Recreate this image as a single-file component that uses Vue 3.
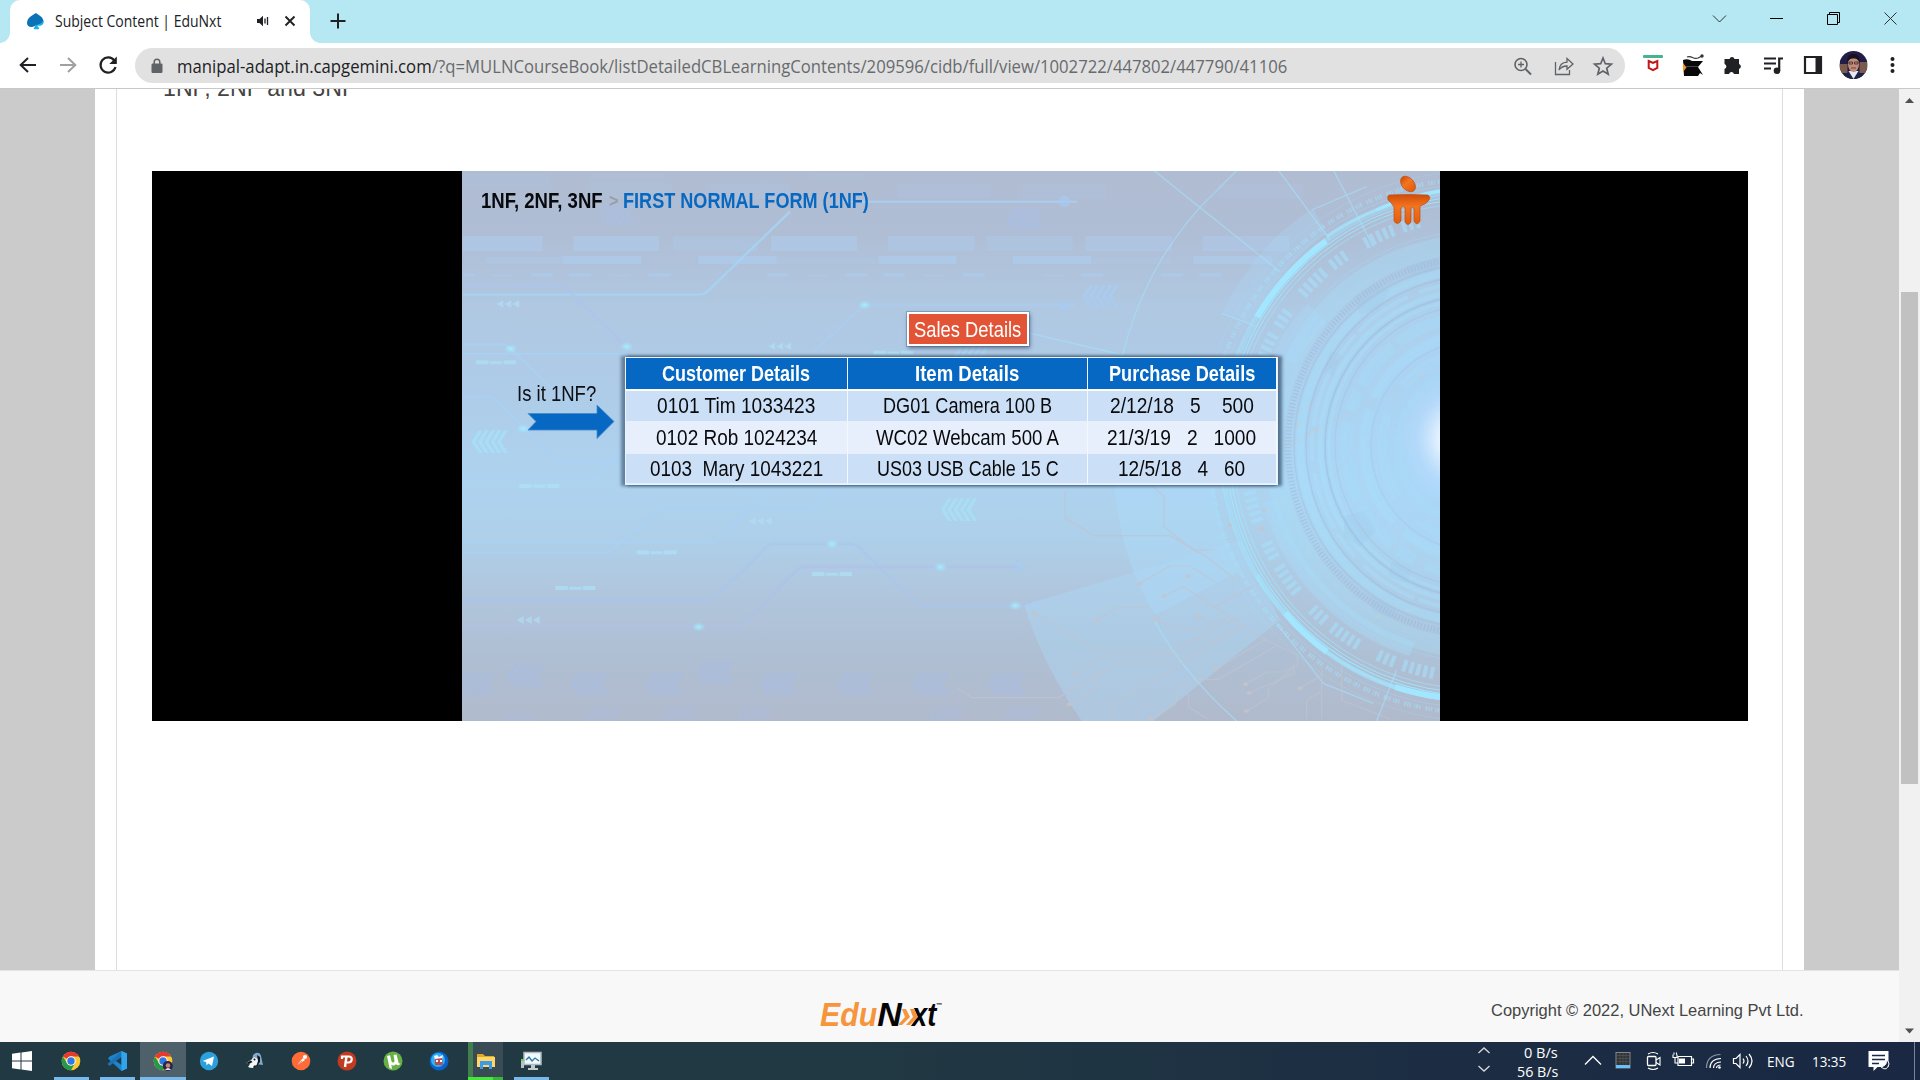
<script setup>
// Stretches or narrows a run of text to a given width in pixels.
const vFit = {
  mounted(el, { value }) {
    const w = el.offsetWidth
    if (!w) return
    el.style.transform = `scaleX(${value / w})`
    el.style.marginRight = `${value - w}px`
  }
}

const columns = [
  { title: 'Customer Details', w: 148 },
  { title: 'Item Details', w: 104 },
  { title: 'Purchase Details', w: 146 }
]
const rows = [
  [['0101 Tim 1033423', 158], ['DG01 Camera 100 B', 169], ['2/12/18   5    500', 144]],
  [['0102 Rob 1024234', 161], ['WC02 Webcam 500 A', 183], ['21/3/19   2   1000', 149]],
  [['0103  Mary 1043221', 173], ['US03 USB Cable 15 C', 182], ['12/5/18   4   60', 127]]
]

const chevrons = [
  [420, 97, 0.5, '#a8c0e8'], [1640, 112, 0.6, '#a8c0e8'], [1867, 345, 0.75, '#a9cdf2'],
  [34, 781, 0.85, '#a8e0fa'], [1442, 985, 0.85, '#a9e0f6'], [1480, 525, 0.6, '#a9daf6'],
  [-6, 1508, 0.65, '#a9bde2'], [142, 1483, 0.7, '#a9bde2'], [332, 1508, 0.7, '#a9bde2'],
  [560, 1508, 0.7, '#a9bde2'], [712, 1473, 0.7, '#a9bde2'], [902, 1508, 0.7, '#a9bde2'],
  [1130, 1508, 0.7, '#a9bde2'], [1357, 1508, 0.7, '#a9bde2'], [1586, 1508, 0.7, '#a9bde2'],
  [120, 1630, 0.4, '#a9bde2'], [375, 1610, 0.4, '#a9bde2'],
  [605, 1610, 0.4, '#a9bde2'], [832, 1610, 0.4, '#a9bde2'], [1405, 1610, 0.4, '#a9bde2'], [1633, 1610, 0.4, '#a9bde2']
]

const bars = [
  [8, 198, 240, 46, 0.5], [340, 198, 258, 46, 0.5], [638, 198, 258, 46, 0.28], [933, 198, 258, 46, 0.5],
  [1284, 198, 260, 46, 0.45], [1580, 198, 258, 46, 0.32], [1876, 198, 260, 46, 0.4], [2228, 198, 260, 46, 0.4],
  [76, 260, 232, 22, 0.28], [308, 258, 236, 24, 0.6], [714, 258, 236, 24, 0.6], [950, 262, 300, 20, 0.2],
  [1255, 258, 234, 24, 0.6], [1658, 258, 236, 24, 0.6], [1894, 262, 240, 20, 0.2], [2200, 258, 236, 24, 0.55],
  [8, 10, 262, 46, 0.16], [390, 8, 220, 20, 0.12], [740, 40, 250, 46, 0.16], [1310, 40, 280, 46, 0.14],
  [1684, 42, 256, 44, 0.16], [380, 40, 256, 44, 0.12], [1050, 8, 165, 20, 0.12], [2270, 40, 256, 46, 0.14],
  [8, 310, 35, 10, 0.5], [94, 312, 64, 10, 0.2], [214, 310, 66, 10, 0.6], [327, 310, 66, 10, 0.6], [445, 312, 64, 10, 0.2],
  [565, 310, 66, 10, 0.6], [920, 310, 66, 10, 0.6], [1040, 312, 64, 10, 0.2], [1158, 310, 66, 10, 0.6], [1270, 310, 66, 10, 0.6],
  [1392, 312, 60, 10, 0.2], [1509, 310, 66, 10, 0.6], [1750, 312, 64, 10, 0.2], [1864, 310, 66, 10, 0.6],
  [2102, 310, 66, 10, 0.6], [2218, 310, 66, 10, 0.6]
]
const triangles = [[109, 402], [924, 529], [866, 1053], [170, 1350]]
const dashes = [[48, 571], [1240, 542], [178, 942], [530, 1141], [286, 1248], [1056, 1206]]
const sparks = [[1214, 405], [152, 536], [500, 530], [190, 776], [1116, 1122], [1441, 1191], [716, 1371], [1666, 1307]]
const traces = [
  'M52 1555 L98 1583 H355 L500 1497', 'M283 1330 L465 1439 H693 L895 1345', 'M410 1509 L500 1457 H690 L875 1350',
  'M388 1603 L468 1555 V1518 M355 1583 L530 1478 H690 L910 1365', 'M516 1647 V1605 L910 1372', 'M468 1350 L530 1313 H620', 'M630 1647 L707 1603 V1555 L745 1535 V1610 L803 1647',
  'M375 960 V1045 L465 1097 H690 L800 1160 L900 1240', 'M640 950 L672 980 V1070 L760 1140 H830', 'M598 1240 L690 1188 H750 L830 1240',
  'M827 1497 L975 1410 M1020 1430 L1072 1455 V1485 L985 1556 V1583 L920 1623', 'M778 1528 H835 L1005 1430', 'M915 1543 L980 1506 H1030 L1060 1490',
  'M927 1569 L1062 1510 V1480', 'M1080 1555 L1145 1515 V1480 V1647', 'M1100 1647 V1590 L1145 1562', 'M1205 1470 V1590 L1350 1647',
  'M640 1345 L700 1375 H770 L860 1345', 'M672 1278 L730 1250 L960 1400 L1020 1430', 'M775 1340 L820 1365 M823 1310 L1010 1210',
  'M1450 613 L1200 745 L1020 830', 'M1107 707 L1020 757 M1075 763 L1020 793', 'M1131 783 L1050 830', 'M1500 700 L1250 830 L1150 960'
]
const nodes = [[283, 1330], [470, 1350], [410, 1509], [388, 1603], [600, 1240], [745, 1219], [672, 1278], [775, 1340], [648, 1349], [827, 1497],
  [778, 1528], [917, 1543], [927, 1569], [919, 1623], [1080, 1555], [630, 1646], [1450, 613], [1107, 707], [1075, 763], [1131, 783],
  [873, 1064], [965, 1075], [1405, 1322], [1314, 1339], [1453, 1048], [975, 1020]]

// Concentric dial at the right: radius, stroke width, opacity, dash pattern, colour
const rings = [
  [267, 4.5, 0.5, '1.4 1.2 2 1 1 3 1.5 1 1.5 1 2 5', '#a3e4ff'], [262, 0.8, 0.5, '', '#9adcff'], [275, 0.7, 0.35, '', '#9ee5ff'],
  [254, 4.5, 0.4, '', '#a0e4ff'], [250, 1.2, 0.9, '', '#9be5ff'], [247, 1, 0.8, '', '#a3e8ff'], [243, 1.2, 0.6, '', '#9be5ff'],
  [256.5, 1, 0.8, '', '#9be5ff'],
  [231, 12, 0.6, '4 3 4 3 4 3 4 3 4 9 4 3 4 3 4 22', '#a5e0fb'],
  [215, 0.7, 0.4, '', '#a5e0fb'], [202, 19, 0.3, '', '#a5e0fb'],
  [188, 6, 0.5, '1 2.4', '#8fb3dc'], [182, 1.2, 0.35, '', '#8eb7e0'], [176, 8, 0.42, '', '#a4e2ff'], [170, 1.2, 0.4, '', '#8eb7e0'],
  [164, 4, 0.4, '60 12 30 5', '#a4e2ff'], [156, 5, 0.36, '', '#a4e2ff'], [151, 1.6, 0.4, '', '#8ab4df'], [147, 3, 0.4, '', '#a4e2ff'],
  [141, 1.2, 0.25, '', '#8ab4df'], [130, 12, 0.26, '80 12 20 8 50 6', '#a4e2ff'], [112, 10, 0.3, '120 14', '#a4e2ff'],
  [105, 1.2, 0.2, '', '#8ab4df'], [94, 10, 0.2, '90 30', '#a4e2ff'], [78, 7, 0.18, '', '#a4e2ff']
]
</script>

<template>
  <div class="screen">
    <header class="tabstrip">
      <div class="tab">
        <svg class="favicon" width="19" height="18" viewBox="0 0 19 18">
          <path d="M10 1C8.500 2.500 1 5 1 11c0 4.500 5.500 5 8.500 2.500C15 13 18 11 17 7.500 16 4 12 3 10 1z" fill="#0a72b5" />
          <path d="M17.500 8c1.200 4.500-2.500 6.500-6 5.500 0 1 .6 1.800 2 2.500l-1 1.300H8.300L7.500 16c1.500-.5 1.600-2 1.500-3C13 13 16 11.500 17.500 8z" fill="#1bb1e7" />
        </svg>
        <div class="tab-title"><span v-fit="166">Subject Content | EduNxt</span></div>
        <svg width="14" height="14" viewBox="0 0 14 14"><path d="M1 5h2.500L7 1.800v10.400L3.500 9H1z" fill="#202124" /><path d="M9 4.500v5M11.500 3v8" stroke="#202124" stroke-width="1.300" /></svg>
        <svg class="tab-close" width="12" height="12" viewBox="0 0 12 12"><path d="M1.500 1.500l9 9m0-9l-9 9" stroke="#202124" stroke-width="1.900" /></svg>
      </div>
      <svg class="newtab" width="16" height="16" viewBox="0 0 16 16"><path d="M8 .5v15M.5 8h15" stroke="#202124" stroke-width="2" /></svg>
      <div class="winctl">
        <svg width="57" height="38" viewBox="0 0 57 38"><path d="M22 15.500l6.500 6.500 6.500-6.500" fill="none" stroke="#333" /></svg>
        <svg width="57" height="38" viewBox="0 0 57 38"><path d="M22 18.500h13" stroke="#000" /></svg>
        <svg width="57" height="38" viewBox="0 0 57 38"><path d="M22.500 14.500h10v10h-10zM24.500 14v-1.500h10v10H33" fill="none" stroke="#000" /></svg>
        <svg width="57" height="38" viewBox="0 0 57 38"><path d="M22.500 12.500l12 12m0-12l-12 12" fill="none" stroke="#333" /></svg>
      </div>
    </header>

    <div class="toolbar">
      <div class="nav">
        <svg width="40" height="24" viewBox="0 0 40 24"><path d="M28 12H13m7-7l-7.300 7 7.300 7" fill="none" stroke="#202124" stroke-width="2" /></svg>
        <svg width="40" height="24" viewBox="0 0 40 24"><path d="M12 12h15m-7-7l7.300 7-7.300 7" fill="none" stroke="#a0a1a3" stroke-width="2" /></svg>
        <svg width="40" height="24" viewBox="0 0 40 24"><path d="M26.300 7.500A7.600 7.600 0 1 0 27.500 14" fill="none" stroke="#202124" stroke-width="2.200" /><path d="M28.800 3.500v7.500h-7.500z" fill="#202124" /></svg>
      </div>
      <div class="omnibox">
        <svg class="lock" width="12" height="16" viewBox="0 0 12 16"><rect x=".5" y="5.500" width="11" height="9.500" rx="1.200" fill="#5f6368" /><path d="M3.200 6V4a2.800 2.800 0 0 1 5.600 0v2" fill="none" stroke="#5f6368" stroke-width="1.500" /></svg>
        <div class="url"><span v-fit="255">manipal-adapt.in.capgemini.com</span><span v-fit="855" class="path">/?q=MULNCourseBook/listDetailedCBLearningContents/209596/cidb/full/view/1002722/447802/447790/41106</span></div>
        <svg width="40" height="22" viewBox="0 0 40 22"><circle cx="18" cy="9.500" r="6" fill="none" stroke="#5f6368" stroke-width="1.600" /><path d="M15 9.500h6M18 6.500v6" stroke="#5f6368" stroke-width="1.300" /><path d="M22.500 14l5.500 5.500" stroke="#5f6368" stroke-width="2" /></svg>
        <svg width="40" height="22" viewBox="0 0 40 22"><path d="M12.500 7v12.500h14V15M16 15c.5-5 3.500-7.500 8-7.800V3.500L30 9l-6 5.300V11c-3.500 0-6 1-8 4z" fill="none" stroke="#5f6368" stroke-width="1.300" /></svg>
        <svg width="40" height="22" viewBox="0 0 40 22"><path d="M20 3l2.300 5.700 6.100.5-4.700 4 1.500 6L20 16l-5.200 3.200 1.500-6-4.700-4 6.100-.5z" fill="none" stroke="#5f6368" stroke-width="1.700" /></svg>
      </div>
      <div class="exts">
        <svg width="40" height="28" viewBox="0 0 40 28"><rect x="10" y="4" width="20" height="3" rx="1" fill="#43b391" /><path d="M15.700 10l4.300 2 4.300-2v7L20 19.200 15.700 17z" fill="none" stroke="#c01818" stroke-width="2" /></svg>
        <svg width="40" height="28" viewBox="0 0 40 28"><path d="M10 9q5-2 9 1h9l2 0-5 6 5 8-3-2-2 3H11z" fill="#080808" /><path d="M10 12v9l3.500-4.500z" fill="#f79420" /><path d="M14 6c5-2 6 3 11 1l4-2" fill="none" stroke="#333" stroke-width="1.200" /><circle cx="29" cy="5" r="1.700" fill="#333" /><path d="M13 15.500h12" stroke="#444" stroke-width="1" /></svg>
        <svg width="40" height="28" viewBox="0 0 40 28"><path d="M12 8h4.500a2.600 2.600 0 0 1 5 0H26v5a2.600 2.600 0 0 1 0 5v5h-5a2.600 2.600 0 0 0-5 0h-4.500v-5a2.600 2.600 0 0 0 0-5V8z" fill="#202124" /></svg>
        <svg width="40" height="28" viewBox="0 0 40 28"><path d="M11 7.500h12M11 12.500h12M11 17.500h7" stroke="#202124" stroke-width="2" /><path d="M26.200 20V7.500H30" fill="none" stroke="#202124" stroke-width="2.200" /><circle cx="24" cy="19.800" r="3.300" fill="#202124" /></svg>
        <svg width="40" height="28" viewBox="0 0 40 28"><path d="M12 6h16v16H12z" fill="none" stroke="#202124" stroke-width="2.200" /><path d="M22.500 6H28v16h-5.500z" fill="#202124" /></svg>
        <svg width="41" height="28" viewBox="-6.500 0 41 28">
          <clipPath id="av"><circle cx="14" cy="14" r="14" /></clipPath>
          <g clip-path="url(#av)"><path d="M0 0h28v28H0z" fill="#221c48" /><path d="M0 13h8v9H0zM20 11h8v11h-8z" fill="#7a5a4a" /><path d="M2 28c2-6 6-7 12-7s9 2 11 7z" fill="#1f2442" /><path d="M9 20l5 8 5-8z" fill="#e6e9f4" /><ellipse cx="14" cy="13" rx="5.500" ry="8" fill="#c08d78" /><path d="M8 12C7 5 10 3 14 3s7 2 6 9c-1-3-2-4.500-6-4.500s-5 1.500-6 4.500z" fill="#17121e" /><path d="M9.500 11h3.500v2H9.500zM15 11h3.500v2H15z" fill="none" stroke="#3c2626" stroke-width=".8" /><path d="M11.500 17h5" stroke="#7c3c3c" /></g>
        </svg>
        <svg width="38" height="28" viewBox="0 0 38 28"><g fill="#202124"><circle cx="18.500" cy="8" r="2" /><circle cx="18.500" cy="14" r="2" /><circle cx="18.500" cy="20" r="2" /></g></svg>
      </div>
    </div>

    <div class="viewport">
      <div class="content">
        <main class="page">
          <section class="panel">
            <h1><span v-fit="193">1NF, 2NF and 3NF</span></h1>
            <div class="player">
              <div class="slide">
                <svg class="art" width="978" height="550" viewBox="0 0 978 550">
                  <defs>
                    <radialGradient id="glow"><stop offset="0" stop-color="#fff" /><stop offset=".35" stop-color="#eef7ff" stop-opacity=".85" /><stop offset=".7" stop-color="#bcdcff" stop-opacity=".45" /><stop offset="1" stop-color="#b0dcff" stop-opacity="0" /></radialGradient>
                    <radialGradient id="halo"><stop offset="0" stop-color="#a8d8ff" stop-opacity=".7" /><stop offset=".6" stop-color="#a8dcfb" stop-opacity=".4" /><stop offset="1" stop-color="#a8dcfb" stop-opacity="0" /></radialGradient>
                    <radialGradient id="spark"><stop offset="0" stop-color="#9df3ff" /><stop offset=".35" stop-color="#a4ecff" stop-opacity=".6" /><stop offset="1" stop-color="#a4e8ff" stop-opacity="0" /></radialGradient>
                    <linearGradient id="orange" x2="0" y2="1"><stop offset="0" stop-color="#cf4d08" /><stop offset=".4" stop-color="#f47420" /><stop offset="1" stop-color="#e05c0c" /></linearGradient>
                  </defs>
                  <g transform="translate(-2 -1) scale(.33333)">
                    <rect v-for="(b, i) in bars" :key="'b' + i" :x="b[0]" :y="b[1]" :width="b[2]" :height="b[3]" :opacity="b[4]" fill="#aecdf0" />
                    <g v-for="(c, i) in chevrons" :key="'c' + i" :transform="`translate(${c[0]} ${c[1]})`" :fill="c[3]" :opacity="c[2]">
                      <path v-for="n in 5" :key="n" :transform="`translate(${(n - 1) * 19} 0)`" d="M22 0h12L13 34l21 34H22L0 34z" />
                    </g>
                    <g fill="#b0dcf6" opacity=".75"><path v-for="(t, i) in triangles" :key="'t' + i" :transform="`translate(${t[0]} ${t[1]})`" d="M0 0l21-12v24zM24 0l21-12v24zM48 0l21-12v24z" /></g>
                    <g fill="#aee2fa" opacity=".7"><path v-for="(d, i) in dashes" :key="'d' + i" :transform="`translate(${d[0]} ${d[1]})`" d="M0 0h38v12H0zM42 2h36v9H42zM82 0h38v12H82z" /></g>
                    <g fill="none" stroke="#a9d2f7" stroke-width="6" opacity=".8">
                      <path stroke="#a4d6f8" stroke-width="7" d="M8 374H715Q733 374 745 362L990 125" />
                      <path stroke="#afc3ee" d="M8 345H290Q310 345 325 362L500 530" />
                      <path d="M1214 405L1060 545M1214 405H1850" opacity=".7" /><path d="M1150 95H1850M8 523H135L152 536L345 720M8 552H500M8 680H85Q97 680 105 690L280 860Q300 878 315 878H480M8 917H390Q405 917 418 900L480 850M445 1148L465 1130L590 1030Q600 1018 615 1018H1045Q1060 1018 1070 1008L1118 960M8 1118H765L932 960M8 1148H445" />
                      <path stroke="#a9c6f0" d="M8 1288H740Q760 1288 775 1275L920 1130Q930 1122 945 1122H1170Q1190 1122 1200 1135L1360 1290Q1375 1307 1390 1307H1720" />
                      <path stroke="#afc0ec" d="M8 1371H830Q845 1371 855 1360L1005 1205Q1020 1191 1040 1191H1675" />
                    </g>
                    <g fill="#a7cbf3" opacity=".7"><circle cx="1813" cy="94" r="17" /><circle cx="1811" cy="406" r="17" opacity=".6" /><circle cx="1677" cy="1188" r="17" opacity=".6" /><circle cx="1728" cy="1307" r="17" opacity=".6" /></g>
                    <ellipse v-for="(s, i) in sparks" :key="'s' + i" :cx="s[0]" :cy="s[1]" rx="21" ry="15" fill="url(#spark)" />
                  </g>
                  <g transform="translate(478 -1) scale(.33333)">
                    <path d="M520 860Q520 1130 645 1335L905 1200Q820 1070 820 860z" fill="#aadcfb" opacity=".45" />
                    <path d="M252 1305L905 1110L1020 1350L640 1653H425Q310 1490 252 1305z" fill="#acd9f8" opacity=".42" />
                    <path d="M845 430Q950 220 1120 115L1160 190Q1010 300 935 465z" fill="#a9d8f7" opacity=".3" />
                    <g fill="none" stroke="#a5e1f9" stroke-width="4" opacity=".65"><path d="M640 0L1020 305M892 0L780 112Q610 300 548 555M1015 0L1170 210M1180 0L1300 230M270 490L550 555M845 430L950 470M640 1345Q720 1500 890 1653M1370 1500L1310 1653M1010 1360L1150 1540L1300 1600M1115 120L1280 50" /></g>
                    <g fill="none" stroke="#bfc4d0" stroke-width="3.500" opacity=".75"><path v-for="(t, i) in traces" :key="i" :d="t" /></g>
                    <g fill="#c7c4c6" opacity=".85"><ellipse v-for="(n, i) in nodes" :key="i" :cx="n[0]" :cy="n[1]" rx="8" ry="5.500" /></g>
                  </g>
                  <circle cx="1014" cy="275" r="245" fill="url(#halo)" />
                  <g fill="none">
                    <circle v-for="(r, i) in rings" :key="'r' + i" cx="1014" cy="275" :r="r[0]" :stroke-width="r[1]" :opacity="r[2]" :stroke-dasharray="r[3]" :stroke="r[4]" />
                    <g stroke="#a2e6ff" stroke-width="6">
                      <path d="M795 146A254 254 0 0 1 864 70" /><path d="M823 442A254 254 0 0 0 865 481" /><path d="M933 516A254 254 0 0 0 978 526" />
                      <path d="M914 39A257 257 0 0 1 978 20" stroke-width="3.500" />
                      <path d="M865 65A257 257 0 0 1 914 39M865 481A254 254 0 0 0 933 516" stroke-width="3" opacity=".7" />
                      <path d="M795 404A254 254 0 0 0 823 442" stroke-width="5" opacity=".5" />
                    </g>
                    <path d="M808 330A213 213 0 0 0 950 478" stroke="#a8dcfb" stroke-width="15" opacity=".4" />
                    <path d="M822 188A207 207 0 0 1 855 142" stroke="#a8dcfb" stroke-width="26" opacity=".3" />
                  </g>
                  <g fill="#9dc2e4" opacity=".22"><path d="M892 125l20-12 16 6-12 20-18 4zM882 345l20-5 12 20-16 16-16-10zM908 425l24 12 5 12-25-8zM945 95l30-8v12l-25 6zM868 180l12 5-10 20-8-5zM930 390l20 10-6 12-18-6z" /></g>
                  <ellipse cx="1000" cy="268" rx="66" ry="70" fill="url(#glow)" />
                  <g fill="url(#orange)" stroke="#b9521b" stroke-width=".7">
                    <ellipse cx="946" cy="13" rx="6" ry="9" transform="rotate(-42 946 13)" />
                    <path d="M927 24Q946 23 966 24Q969 26 967 29Q965 33 958 35V50Q955 56 952 50V38Q951 35 949 37V51Q946 56 943 51V37Q941 34 939 37V50Q935 55 932 50V36Q929 31 926 29Q925 25 927 24z" />
                  </g>
                </svg>

                <div class="crumbs">
                  <span v-fit="122" class="c-root">1NF, 2NF, 3NF</span>
                  <span v-fit="10" class="c-sep">&gt;</span>
                  <span v-fit="246" class="c-here">FIRST NORMAL FORM (1NF)</span>
                </div>
                <div class="badge"><span v-fit="107">Sales Details</span></div>
                <div class="board">
                  <div class="prompt">
                    <span v-fit="79">Is it 1NF?</span>
                    <svg width="90" height="38" viewBox="0 0 90 38"><path d="M1 10.500H70V2L87 18.500L70 35.500V27H1l8-8.500z" fill="#0768c3" stroke="#4389ca" stroke-width=".8" /></svg>
                  </div>
                  <div class="grid">
                    <div v-for="c in columns" :key="c.title" class="th"><span v-fit="c.w">{{ c.title }}</span></div>
                    <template v-for="(r, i) in rows" :key="i">
                      <div v-for="(cell, j) in r" :key="j" class="td" :class="{ light: i === 1 }"><span v-fit="cell[1]">{{ cell[0] }}</span></div>
                    </template>
                  </div>
                </div>
              </div>
            </div>
          </section>
        </main>
        <footer class="footer">
          <div class="logo">
            <span v-fit="57" class="edu">Edu</span><span v-fit="25" class="n">N</span><svg width="20" height="18" viewBox="0 0 20 18"><path d="M3 1h4l4 8-8 8H-1l7-8zM11 1h4l4 8-8 8H7l7-8z" fill="#f6953b" /></svg><span v-fit="24" class="xt">xt</span><sup>™</sup>
          </div>
          <div class="copy"><span v-fit="312">Copyright © 2022, UNext Learning Pvt Ltd.</span></div>
        </footer>
      </div>
      <div class="scroll">
        <svg width="21" height="24" viewBox="0 0 21 24"><path d="M6 14l4.500-5 4.500 5z" fill="#505050" /></svg>
        <div class="thumb"></div>
        <svg width="21" height="22" viewBox="0 0 21 22"><path d="M6 8.500h9l-4.500 5z" fill="#505050" /></svg>
      </div>
    </div>

    <div class="taskbar">
      <div class="app start"><svg width="20" height="20" viewBox="0 0 20 20"><path d="M0 2.800l8.500-1.200v8H0zM9.500 1.400L20 0v9.600H9.500zM0 10.500h8.500v8L0 17.300zM9.500 10.500H20V20L9.500 18.600z" fill="#fff" /></svg></div>
      <div v-for="k in [0, 1]" :key="k" class="app run" :class="k ? 'active' : 'browser'">
        <svg width="20" height="20" viewBox="0 0 20 20"><circle cx="10" cy="10" r="9.300" fill="#fcc934" /><path d="M10 10L1.900 5.400A9.300 9.300 0 0 1 18.100 5.400H10z" fill="#e33b2e" /><path d="M10 10l4 2.300-4 7A9.300 9.300 0 0 1 1.900 5.400L6 12.300z" fill="#279847" /><circle cx="10" cy="10" r="4.700" fill="#fff" /><circle cx="10" cy="10" r="3.700" fill="#3078e6" /><g v-if="k"><circle cx="14.800" cy="15" r="5" fill="#2b2348" /><circle cx="15" cy="14.500" r="2.300" fill="#be8c78" /><path d="M12 19q3-4 6 0z" fill="#e4dfec" /></g></svg>
      </div>
      <div class="app run vs"><svg width="22" height="22" viewBox="0 0 22 22"><path d="M15.500 1L21 3.500v15L15.500 21 2 8.500 3.500 6.500z" fill="#1b86cd" /><path d="M15.500 7L3.500 16 1.500 14 15.500 1z" fill="#1d72b5" /><path d="M15.500 7v8L10 11z" fill="#213943" /><path d="M15.500 1L21 3.500v15L15.500 21z" fill="#30a5ee" /></svg></div>
      <div class="app"><svg width="20" height="20" viewBox="0 0 20 20"><circle cx="10" cy="10" r="9.200" fill="#2ba0dc" /><path d="M3.500 10L15 5.500l-2 9.500-3.500-2.600-2 1.900-.4-3.200z" fill="#fff" /></svg></div>
      <div class="app"><svg width="20" height="20" viewBox="0 0 20 20"><path d="M8 4c3-3 7-3 8 1l2 9-7-1-3 4H4l1-4 2-3z" fill="#7fa9cc" /><path d="M1 12l5-3 3-3 4 2 1 4-6 5-5-1 2-3z" fill="#f4f5f6" /><path d="M1 12l5-2.500 1.500 1.500L4 13zM12 4l3 2v5l-4 5 2-6zM8 16l2-2 1 1-2 2z" fill="#10161c" /><circle cx="9.500" cy="8.500" r="1" fill="#111" /></svg></div>
      <div class="app"><svg width="20" height="20" viewBox="0 0 20 20"><circle cx="10" cy="10" r="9.300" fill="#ff6c37" /><path d="M5 15l7-8 2 2z" fill="#fff" /><circle cx="14" cy="6" r="2.100" fill="#fff" /><path d="M5 15l6-5" stroke="#d14c20" stroke-width=".7" /></svg></div>
      <div class="app"><svg width="20" height="20" viewBox="0 0 20 20"><circle cx="10" cy="10" r="9.500" fill="#c23a20" /><path d="M5 8V5.500h7c4 0 3.500 6-.5 6H9.500" fill="none" stroke="#fff" stroke-width="2.200" /><path d="M9.500 5L8 16" stroke="#fff" stroke-width="2.400" /></svg></div>
      <div class="app"><svg width="20" height="20" viewBox="0 0 20 20"><circle cx="10" cy="10" r="9.500" fill="#67b045" /><path d="M4 5l3-.7 1.500 6c.5 2 3 1.500 3-.5L10.500 4l3-.6 2 8c.3 1 1 1.200 2 1-1 2-3.500 2.500-4.500.6-1.500 2-4 2-4.700.6L9 18l-2.500-1z" fill="#fff" /></svg></div>
      <div class="app"><svg width="20" height="20" viewBox="0 0 20 20"><circle cx="10" cy="10" r="9.500" fill="#0662cc" /><circle cx="9" cy="9" r="7" fill="#2eb2f0" /><path d="M5 5l3-1 2 2 4-2-1 5H6z" fill="#f4f9fd" /><path d="M6 8l7-1 1 7H6z" fill="#bd4a50" /><path d="M7 9h2v2H7zM11 9h2v2h-2z" fill="#fff" /></svg></div>
      <div class="app files"><svg width="20" height="20" viewBox="0 0 20 20"><path d="M1 3h6l2 2h9v3H1z" fill="#e4a823" /><path d="M1 6h18v10H1z" fill="#ffd668" /><path d="M4 18v-8h12v8h-3v-4H7v4z" fill="#3b9be6" /></svg></div>
      <div class="app run"><svg width="22" height="20" viewBox="0 0 22 20"><rect x="4" y="1.500" width="17" height="12" fill="#f2f7f9" stroke="#aebbc2" stroke-width="1.500" /><path d="M6 9l3-3 3 4 3-3 4 3" fill="none" stroke="#277aad" stroke-width="1.300" /><path d="M11 14h4v3h3v2H8v-2h3z" fill="#c1cacd" /><path d="M1 8h3v9H1z" fill="#b7c1c3" /><path d="M1 8h3v2H1z" fill="#58df44" /></svg></div>
      <div class="tray">
        <svg width="28" height="38" viewBox="0 0 28 38"><path d="M8.500 11l5.500-5 5.500 5M8.500 24l5.500 5 5.500-5" fill="none" stroke="#d5d9e0" stroke-width="1.300" /></svg>
        <div class="speed"><div><span v-fit="34">0 B/s</span></div><div><span v-fit="41">56 B/s</span></div></div>
        <svg class="more" width="30" height="38" viewBox="0 0 30 38"><path d="M7 22.500l8-8 8 8" fill="none" stroke="#fff" stroke-width="1.300" /></svg>
        <svg width="30" height="38" viewBox="0 0 30 38"><rect x="8" y="10.500" width="14" height="15.500" fill="#303235" stroke="#81868c" /><path d="M9 13.500h12M9 16.500h12M9 19.500h12M12 11v12M15 11v12M18 11v12" stroke="#555a60" stroke-width=".6" /><path d="M8 23h14v3H8z" fill="#67c2f7" /></svg>
        <svg width="31" height="38" viewBox="0 0 31 38"><rect x="9.500" y="14.500" width="8.500" height="9" rx="1" fill="none" stroke="#fff" stroke-width="1.300" /><path d="M18 18l4-2.500v7.500l-4-2.500M10 12q5-3 10 0M10 26q5 3 10 0" fill="none" stroke="#fff" stroke-width="1.100" /></svg>
        <svg width="29" height="38" viewBox="0 0 29 38"><path d="M9 14.500h13.500v9H9zM23 17h1.500v4H23" fill="none" stroke="#fff" stroke-width="1.200" /><path d="M10 16.500h6v5H10z" fill="#fff" /><path d="M4 12.500v3h4v-3M5 10.500v2M7.500 10.500v2M6 15.500V21h3" fill="none" stroke="#fff" stroke-width="1.100" /></svg>
        <svg width="31" height="38" viewBox="0 0 31 38"><g fill="none" stroke="#fff" stroke-width="1.200"><path d="M8.500 26q0-13 14-13.500" opacity=".5" /><path d="M12 26q0-9 11-9.500M15.500 26q0-5.500 7.500-6M18.500 26q0-2.500 4-3" /></g><circle cx="21.500" cy="25.500" r="1.300" fill="#fff" /></svg>
        <svg width="29" height="38" viewBox="0 0 29 38"><path d="M4.500 16.500h2.500l4-4v13l-4-4H4.500z" fill="none" stroke="#fff" stroke-width="1.200" /><path d="M14 16.500q2 2.500 0 5M17 14q4 5 0 10M20 12q6 7 0 14" fill="none" stroke="#fff" stroke-width="1.200" /></svg>
        <div class="lang"><span v-fit="28">ENG</span></div>
        <div class="time"><span v-fit="34">13:35</span></div>
        <svg width="50" height="38" viewBox="0 0 50 38"><path d="M14.500 9h20v16h-11l-4 4v-4h-5z" fill="#fff" /><path d="M18 13.500h13M18 17.500h13M18 21.500h7" stroke="#1b2a45" stroke-width="1.300" /><path d="M32 18q2 5-5 7 6 5 8-3 0-3-3-4z" fill="#1b2a45" stroke="#fff" /></svg>
        <div class="peek"></div>
      </div>
    </div>
  </div>
</template>

<style>
body { overflow: hidden; }
</style>

<style scoped>
.screen { width: 1920px; height: 1080px; display: flex; flex-direction: column; overflow: hidden; background: #fff; font-family: "Open Sans", "Noto Sans", sans-serif; }
.screen * { box-sizing: border-box; }
svg { display: block; flex: none; }
span { display: inline-block; white-space: pre; transform-origin: 0 50%; flex: none; }

.tabstrip { height: 43px; flex: none; background: #b5e8f2; display: flex; }
.tab { position: relative; width: 300px; height: 43px; margin-left: 10px; background: #fff; border-radius: 10px 10px 0 0; display: flex; align-items: center; padding: 0 0 1px 16px; }
.tab::before, .tab::after { content: ""; position: absolute; bottom: 0; width: 10px; height: 10px; }
.tab::before { left: -10px; background: radial-gradient(circle at 0 0, transparent 9.500px, #fff 10px); }
.tab::after { right: -10px; background: radial-gradient(circle at 100% 0, transparent 9.500px, #fff 10px); }
.tab-title { width: 201px; margin-left: 10px; padding-bottom: 1px; font-size: 15.500px; line-height: 20px; color: #202124; }
.tab-close { margin-left: 14px; }
.newtab { margin: 13px 0 0 20px; }
.winctl { margin: 0 1px 0 auto; display: flex; }

.toolbar { height: 46px; flex: none; display: flex; border-bottom: 1px solid #c8c8c8; padding-top: 5px; }
.nav { width: 135px; display: flex; padding: 5px 0 0 8px; }
.omnibox { width: 1490px; height: 35px; border-radius: 18px; background: #e1e1e1; display: flex; align-items: center; padding-right: 2px; }
.lock { margin-left: 16px; }
.url { flex: 1; display: flex; margin-left: 14px; font-size: 17.500px; line-height: 24px; color: #202124; }
.url .path { color: #686b6e; }
.exts { display: flex; padding: 3px 0 0 8px; }

.viewport { height: 953px; flex: none; display: flex; background: #cbcbcb; }
.content { width: 1899px; display: flex; flex-direction: column; }
.page { width: 1709px; height: 881px; margin-left: 95px; background: #fff; padding: 0 21px; }
.panel { height: 881px; border: solid #ddd; border-width: 0 1px; padding-left: 35px; overflow: hidden; }
h1 { display: flex; align-items: flex-start; height: 82px; margin: 0; padding-left: 11px; font: 24px/28px "Liberation Sans", Arial, sans-serif; color: #444; }
h1 span { margin-top: -15px; }
.player { width: 1596px; height: 550px; background: #000; padding-left: 310px; }
.slide { position: relative; width: 978px; height: 550px; overflow: hidden; background: linear-gradient(#b0bcd2 0, #afbed5 12%, #b0c8e2 25%, #aecbe7 38%, #aed3ef 57%, #aecfe9 67%, #b0c5dc 78%, #afbfd3 88%, #b1bacd 100%); font-family: "Liberation Sans Narrow", "Liberation Sans", sans-serif; font-size: 22.500px; }
.art { position: absolute; left: 0; top: 0; }
.crumbs, .badge, .board { position: relative; }
.crumbs { display: flex; gap: 6px; height: 32px; padding: 16px 0 0 19px; line-height: 28px; font-weight: 700; }
.c-root { color: #08090c; }
.c-sep { color: #999ea8; font-size: 18px; }
.c-here { color: #0868bf; margin-left: -1px; }
.badge { width: 122px; height: 34px; margin: 109px 0 0 445px; border: 2px solid #fff; outline: 1px solid rgba(70, 90, 120, .35); background: #e35437; color: #fff; box-shadow: 1px 2px 4px rgba(30, 50, 90, .6); display: flex; justify-content: center; line-height: 31px; }
.badge span { margin-left: -1px; }
.board { display: flex; align-items: flex-start; margin-top: 11px; }
.prompt { width: 163px; padding: 24px 0 0 55px; line-height: 26px; color: #0c1016; }
.prompt svg { margin: -4px 0 0 10px; }
.grid { display: grid; grid-template-columns: 222px 240px 189px; grid-template-rows: 33px 31px 32px 30px; width: 653px; border: 1px solid #e8f4ff; box-shadow: 3px 0 3px 1px rgba(40, 65, 95, .65), -3px 0 3px 1px rgba(40, 65, 95, .55); background: #cbdff6; }
.th, .td { display: flex; justify-content: center; align-items: center; border-right: 1px solid #f4f8ff; line-height: 26px; }
.th { background: #0768c3; color: #fff; font-weight: 700; border-bottom: 2px solid #fff; }
.td { color: #0a0a0d; border-bottom: 1px solid #e6effb; }
.light { background: #e8effc; }

.footer { height: 72px; background: #f8f8f8; border-top: 1px solid #e4e4e4; display: flex; }
.logo { display: flex; width: 130px; margin-left: 820px; padding-top: 25px; height: 60px; font: italic 700 34px/36px "Liberation Sans", Arial, sans-serif; }
.edu { color: #f6953b; }
.n, .xt { color: #050505; }
.logo svg { margin: 12px -7px 0 -3px; position: relative; z-index: 1; }
.logo sup { font: 700 6px/8px "Liberation Sans", sans-serif; margin-top: 5px; }
.copy { margin-left: 541px; padding-top: 28px; font: 17px/24px "Liberation Sans", Arial, sans-serif; color: #444; }
.scroll { width: 21px; background: #f1f1f1; display: flex; flex-direction: column; align-items: center; }
.thumb { width: 17px; height: 492px; margin: 179px 0 auto; background: #c1c1c1; }

.taskbar { height: 38px; flex: none; display: flex; background: linear-gradient(90deg, #213943 0, #213943 45%, #1c2d43 75%, #1a2843 100%); color: #fff; }
.app { width: 46px; height: 38px; flex: none; display: flex; align-items: center; justify-content: center; position: relative; }
.start { width: 48px; padding-right: 4px; order: -4; }
.browser { order: -3; }
.vs { order: -2; }
.active { order: -1; background: #4e616a; }
.run::after { content: ""; position: absolute; left: 6px; right: 5px; bottom: 0; height: 3px; background: #76b9ed; }
.active::after { left: 0; right: 0; }
.files { background: linear-gradient(90deg, #427e50 5px, #394c55 5px); width: 35px; margin: 0 5px 0 6px; }
.files::after { content: ""; position: absolute; inset: auto 0 0; height: 3px; background: linear-gradient(90deg, #48e53d 70%, #35b935 70%); }
.tray { margin-left: auto; display: flex; }
.speed { width: 60px; padding-top: 1px; font-size: 15px; line-height: 19px; }
.speed div { display: flex; justify-content: flex-end; }
.more { margin-left: 20px; }
.lang, .time { display: flex; justify-content: center; font-size: 15px; line-height: 38px; }
.lang { width: 46px; }
.time { width: 50px; }
.peek { width: 1px; height: 38px; margin: 0 5px 0 10px; background: #7a8496; }
</style>
